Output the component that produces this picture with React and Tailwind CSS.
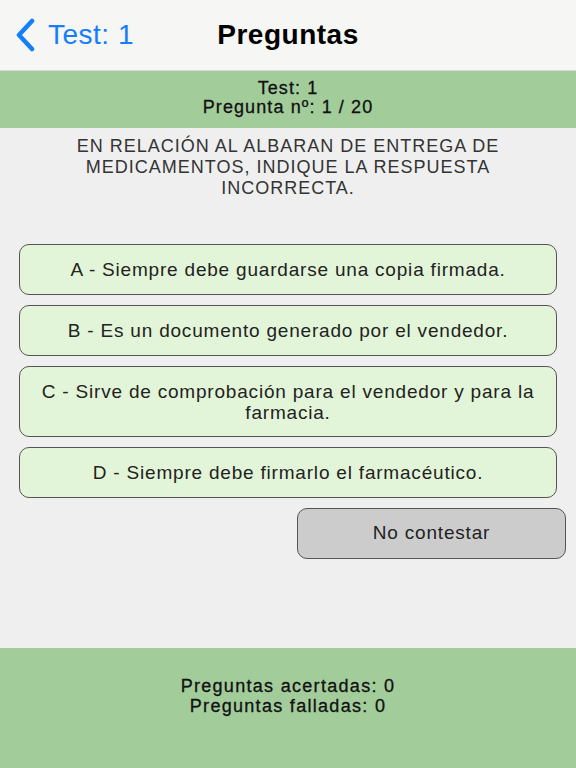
import React from "react";

const options = [
  "A - Siempre debe guardarse una copia firmada.",
  "B - Es un documento generado por el vendedor.",
  "C - Sirve de comprobación para el vendedor y para la farmacia.",
  "D - Siempre debe firmarlo el farmacéutico.",
];

function BackChevron() {
  return (
    <svg width="22" height="34" viewBox="0 0 22 34" fill="none">
      <path d="M18 3 L5 17 L18 31" stroke="#147efb" strokeWidth="4.5" strokeLinecap="round" strokeLinejoin="round" />
    </svg>
  );
}

export default function App() {
  return (
    <div
      className="w-[576px] h-[768px] flex flex-col bg-[#efefef] text-black overflow-hidden"
      style={{ fontFamily: '"Liberation Sans", Arial, sans-serif' }}
    >
      {/* nav bar */}
      <div className="relative h-[71px] shrink-0 bg-[#f6f6f4] border-b border-[#d6d6d6] flex items-center">
        <div className="flex items-center pl-[14px] gap-[12px] text-[#147efb] text-[28px] tracking-[0.5px]">
          <BackChevron />
          <span>Test: 1</span>
        </div>
        <div className="absolute left-0 right-0 top-0 h-full flex items-center justify-center pointer-events-none">
          <span className="text-[28px] font-bold tracking-[0.5px]">Preguntas</span>
        </div>
      </div>

      {/* info band */}
      <div className="h-[57px] shrink-0 bg-[#a3cc9b] flex flex-col items-center justify-center pb-[3px] text-[18px] leading-[19px] tracking-[1.1px] text-[#111] [-webkit-text-stroke:0.3px_#111]">
        <div>Test: 1</div>
        <div>Pregunta nº: 1 / 20</div>
      </div>

      {/* question */}
      <div className="flex-1 flex flex-col">
        <div className="pt-[8px] px-[58px] text-center text-[18px] leading-[21px] text-[#333] tracking-[1px]">
          EN RELACIÓN AL ALBARAN DE ENTREGA DE MEDICAMENTOS, INDIQUE LA RESPUESTA INCORRECTA.
        </div>

        <div className="mt-[45px] px-[19px] flex flex-col gap-[10px]">
          {options.map((o) => (
            <button
              key={o}
              className="w-full min-h-[51px] px-[16px] py-[13.5px] rounded-[10px] border-[1.5px] border-[#555] bg-[#e3f5d8] text-[19px] leading-[21px] tracking-[0.8px] text-[#222] text-center"
            >
              {o}
            </button>
          ))}
        </div>

        <div className="mt-[10px] pr-[10px] flex justify-end">
          <button className="w-[269px] h-[51px] rounded-[10px] border-[1.5px] border-[#555] bg-[#cccccc] text-[19px] tracking-[0.8px] text-[#222]">
            No contestar
          </button>
        </div>
      </div>

      {/* footer */}
      <div className="h-[120px] shrink-0 bg-[#a3cc9b] flex flex-col items-center pt-[28px] text-[18px] leading-[20px] tracking-[1.3px] text-[#111] [-webkit-text-stroke:0.3px_#111]">
        <div>Preguntas acertadas: 0</div>
        <div>Preguntas falladas: 0</div>
      </div>
    </div>
  );
}
